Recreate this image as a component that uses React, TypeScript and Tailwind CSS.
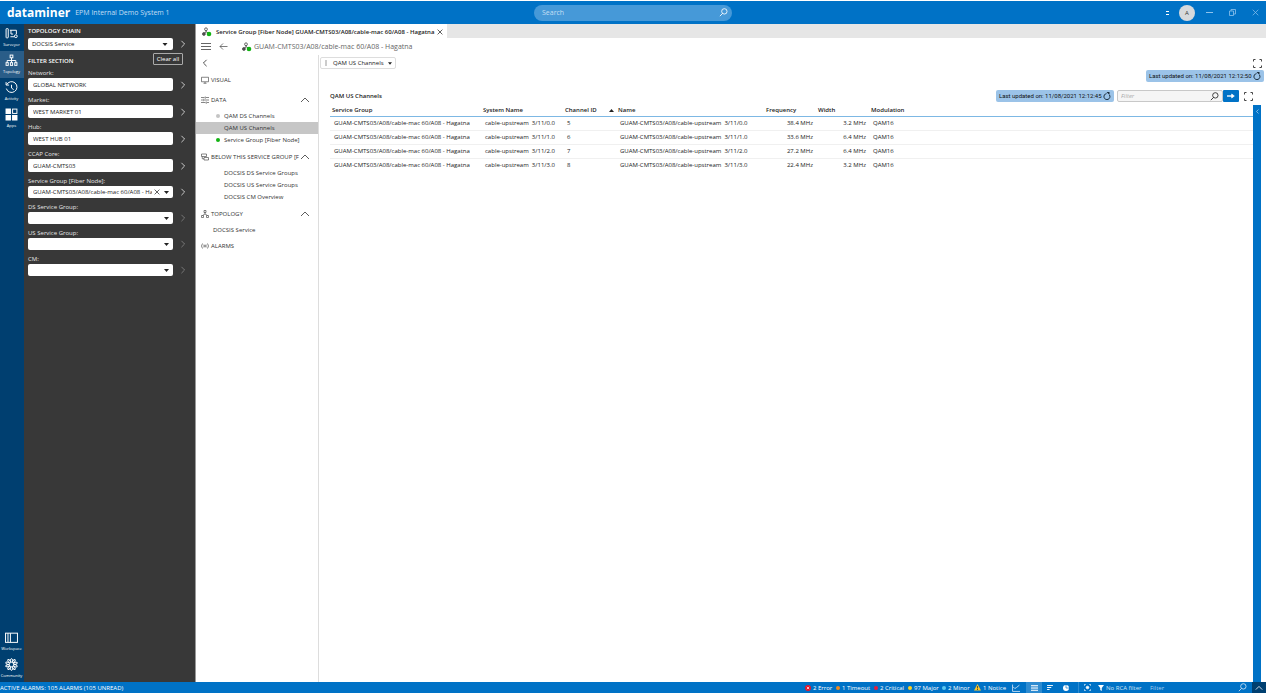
import { ReactNode, useState } from "react";
import clsx from "clsx";

interface IconProps {
  className?: string;
}

const SearchIcon = ({ className }: IconProps) => (
  <svg viewBox="0 0 16 16" fill="none" stroke="currentColor" strokeWidth="1.5" className={clsx("h-[9px] w-[9px] shrink-0", className)}>
    <circle cx="9.5" cy="6" r="4.8" />
    <path d="M6.5 9.5L1.5 14.5" />
  </svg>
);

const ArrowDown = ({ className }: IconProps) => (
  <svg viewBox="0 0 10 6" fill="currentColor" className={clsx("shrink-0", className)}>
    <path d="M0 0H10L5 6Z" />
  </svg>
);

const Chevron = ({ className, d }: IconProps & { d: string }) => (
  <svg viewBox="0 0 10 10" fill="none" stroke="currentColor" className={clsx("shrink-0", className)}>
    <path d={d} />
  </svg>
);

const CloseIcon = ({ className }: IconProps) => (
  <svg viewBox="0 0 10 10" fill="none" stroke="currentColor" strokeWidth="1.2" className={clsx("shrink-0", className)}>
    <path d="M1 1L9 9M9 1L1 9" />
  </svg>
);

const FullscreenIcon = () => (
  <svg viewBox="0 0 9 9" fill="none" stroke="#444" className="h-[9px] w-[9px]">
    <path d="M.5 2.5V.5H2.5M6.5 .5H8.5V2.5M8.5 6.5V8.5H6.5M2.5 8.5H.5V6.5" />
  </svg>
);

const RefreshIcon = () => (
  <svg viewBox="0 0 16 16" fill="none" stroke="#1a2b3a" strokeWidth="2" className="h-2 w-2">
    <path d="M13 6A6 6 0 1 1 7 3.2" />
    <path d="M7 0L13 0V6Z" fill="#1a2b3a" stroke="none" />
  </svg>
);

const NodeIcon = () => (
  <svg viewBox="0 0 20 20" fill="none" stroke="#444" strokeWidth="1.6" className="h-[10px] w-[10px] shrink-0">
    <circle cx="8" cy="4.5" r="2.8" />
    <circle cx="3.8" cy="14" r="2.8" fill="#555" />
    <path d="M8 7.5V10L5 12M8 9.5L13 12" />
    <circle cx="14" cy="14" r="4.6" fill="#12b312" stroke="none" />
  </svg>
);

const petals = [0, 36, 72, 108, 144, 180, 216, 252, 288, 324];

const railTop = [
  {
    label: "Surveyor",
    icon: (
      <>
        <rect x="2" y="3" width="4" height="17" rx="1" />
        <path d="M9 6H21V13M11 6V13H15" />
        <circle cx="20" cy="17" r="2.6" />
        <path d="M10 18H17" />
      </>
    ),
  },
  {
    label: "Topology",
    icon: (
      <>
        <rect x="9.5" y="2" width="5" height="5" />
        <path d="M12 7V16M4 16V12H20V16" />
        <rect x="2" y="16" width="4" height="5" />
        <rect x="10" y="16" width="4" height="5" />
        <rect x="18" y="16" width="4" height="5" />
      </>
    ),
  },
  {
    label: "Activity",
    icon: (
      <>
        <path d="M3 7A10 10 0 1 1 2.5 14" />
        <path d="M2 2V7.5H7.5M12 7V13L16 16" />
      </>
    ),
  },
  {
    label: "Apps",
    icon: (
      <>
        <path d="M1 1H11V11H1ZM1 13H11V23H1ZM13 13H23V23H13Z" fill="white" stroke="none" />
        <rect x="14" y="2" width="8" height="8" />
      </>
    ),
  },
];

const railBottom = [
  {
    label: "Workspace",
    icon: (
      <>
        <rect x="1" y="4" width="22" height="17" />
        <path d="M10 4V21M5.5 4V21" />
      </>
    ),
  },
  {
    label: "Community",
    icon: (
      <>
        {petals.map((p) => (
          <ellipse key={p} cx="12" cy="4.5" rx="1.8" ry="3.5" transform={`rotate(${p} 12 12)`} strokeWidth="1.8" />
        ))}
      </>
    ),
  },
];

function RailButton({ label, icon, active }: { label: string; icon: ReactNode; active?: boolean }) {
  return (
    <button className={clsx("flex h-[27px] w-full flex-col items-center justify-center gap-[2px] pr-px text-[4px] leading-[6px] text-white", active && "bg-[#2a5d88]")}>
      <svg viewBox="0 0 24 24" fill="none" stroke="white" strokeWidth="1.8" className="h-[13px] w-[13px]">
        {icon}
      </svg>
      {label}
    </button>
  );
}

interface IFilter {
  id: string;
  label: string;
  value: string;
  select?: boolean;
  clear?: boolean;
}

const filters: IFilter[] = [
  { id: "network", label: "Network:", value: "GLOBAL NETWORK" },
  { id: "market", label: "Market:", value: "WEST MARKET 01" },
  { id: "hub", label: "Hub:", value: "WEST HUB 01" },
  { id: "ccap", label: "CCAP Core:", value: "GUAM-CMTS03" },
  { id: "sg", label: "Service Group [Fiber Node]:", value: "GUAM-CMTS03/A08/cable-mac 60/A08 - Hagatna", select: true, clear: true },
  { id: "ds", label: "DS Service Group:", value: "", select: true },
  { id: "us", label: "US Service Group:", value: "", select: true },
  { id: "cm", label: "CM:", value: "", select: true },
];

function FilterField({ id, label, value, select, clear }: IFilter) {
  return (
    <div>
      <label htmlFor={id} className="block leading-[9px] text-[#e6e6e6]">{label}</label>
      <div className="flex items-center">
        <div className={clsx("flex min-w-0 flex-1 items-center rounded-[2px] bg-white text-[#222]", select ? "h-3" : "h-[13px]")}>
          {select ? (
            <>
              <select id={id} defaultValue={value} className="h-full min-w-0 flex-1 appearance-none bg-transparent pl-[5px] outline-none">
                <option>{value}</option>
              </select>
              {clear && (
                <button aria-label="Clear" className="mr-1 ml-[2px]">
                  <CloseIcon className="h-[6px] w-[6px]" />
                </button>
              )}
              <ArrowDown className="mr-1 h-[3px] w-[5px]" />
            </>
          ) : (
            <input id={id} defaultValue={value} className="h-full w-full bg-transparent px-[5px] outline-none" />
          )}
        </div>
        <button aria-label={`Open ${label}`} className={clsx("ml-[6px]", select && !clear ? "text-[#888]" : "text-[#eee]")}>
          <Chevron d="M3 1L7 5L3 9" className="h-2 w-2" />
        </button>
      </div>
    </div>
  );
}

function FilterPanel() {
  return (
    <aside className="w-[171px] shrink-0 bg-[#383838] pt-[3px] pr-[8px] pl-1">
      <label htmlFor="chain" className="block font-semibold leading-[9px] text-white">TOPOLOGY CHAIN</label>
      <div className="mt-[2px] flex items-center">
        <div className="flex h-3 flex-1 items-center rounded-[2px] bg-white text-[#222]">
          <select id="chain" className="h-full flex-1 appearance-none bg-transparent pl-1 outline-none">
            <option>DOCSIS Service</option>
          </select>
          <ArrowDown className="mr-[5px] h-[3px] w-[6px]" />
        </div>
        <button aria-label="Open chain" className="ml-[6px] text-[#eee]">
          <Chevron d="M3 1L7 5L3 9" className="h-2 w-2" />
        </button>
      </div>
      <div className="mt-[3px] mb-1 flex items-center justify-between">
        <h2 className="pt-1 font-semibold text-white">FILTER SECTION</h2>
        <button className="mr-1 h-3 w-[30px] rounded-[1px] border border-[#aaa] leading-[9px] text-white">Clear all</button>
      </div>
      <div className="flex flex-col gap-[5px]">
        {filters.map((f) => (
          <FilterField key={f.id} {...f} />
        ))}
      </div>
    </aside>
  );
}

function NavSection({ icon, title, children }: { icon: ReactNode; title: string; children?: ReactNode }) {
  const [open, setOpen] = useState(true);
  return (
    <section>
      <button onClick={() => setOpen(!open)} className="flex h-4 w-full items-center gap-[2px] pr-[9px] pl-[5px] text-[#333]">
        <svg viewBox="0 0 16 16" fill="none" stroke="#444" strokeWidth="1.3" className="h-2 w-2 shrink-0">{icon}</svg>
        <span className="whitespace-nowrap">{title}</span>
        {children && <Chevron d="M0 7.5L5 2.5L10 7.5" className="ml-auto h-2 w-2" />}
      </button>
      {open && children}
    </section>
  );
}

function NavItem({ label, dot, active, className = "pl-[20px]" }: { label: string; dot?: string; active?: boolean; className?: string }) {
  return (
    <a href="#" className={clsx("flex h-3 items-center gap-1 text-[#333]", className, active && "bg-[#c6c6c6]")}>
      <span className={clsx("h-1 w-1 rounded-full", dot)} />
      {label}
    </a>
  );
}

function SideNav() {
  return (
    <nav className="w-[123px] shrink-0 border-r border-[#ddd] bg-white">
      <button aria-label="Back" className="flex h-4 items-center pl-[5px] text-[#222]">
        <Chevron d="M7 1L3 5L7 9" className="h-2 w-2" />
      </button>
      <div className="mt-px">
        <NavSection title="VISUAL" icon={<path d="M1 2.5H15V11.5H1ZM8 12V14.5M5 14.5H11" />} />
      </div>
      <div className="mt-1 mb-[3px]">
        <NavSection title="DATA" icon={<path d="M0 3H7M10 3H16M0 8H3M6 8H16M0 13H9M12 13H16M8.5 1V5.5M4.5 5.5V10.5M10.5 11V15.5" />}>
          <div className="pt-[2px]">
            <NavItem label="QAM DS Channels" dot="bg-[#c4c4c4]" />
            <NavItem label="QAM US Channels" active />
            <NavItem label="Service Group [Fiber Node]" dot="bg-[#12b312]" />
          </div>
        </NavSection>
      </div>
      <NavSection title="BELOW THIS SERVICE GROUP [F" icon={<path d="M1 2H11V7H1ZM6 9H15V14H6ZM2.5 7V11.5H6" />}>
        <div className="pt-[2px] pb-[3px]">
          <NavItem label="DOCSIS DS Service Groups" />
          <NavItem label="DOCSIS US Service Groups" />
          <NavItem label="DOCSIS CM Overview" />
        </div>
      </NavSection>
      <NavSection title="TOPOLOGY" icon={<path d="M6 1H10V5H6ZM1 11H5V15H1ZM11 11H15V15H11ZM8 5V8L3 11M8 8L13 11" />}>
        <div className="py-[2px]">
          <NavItem label="DOCSIS Service" className="pl-[9px]" />
        </div>
      </NavSection>
      <NavSection title="ALARMS" icon={<path d="M3 3Q-1 8 3 13M13 3Q17 8 13 13M6 5V11M10 5V11M6 8H10" />} />
    </nav>
  );
}

function UpdatedPill({ time }: { time: string }) {
  return (
    <div className="flex h-3 w-[118px] items-center justify-between rounded-[2px] bg-[#9bc3e8] pr-[3px] pl-[3px] font-['Roboto','Open_Sans',sans-serif] text-[#111]">
      <span className="whitespace-nowrap">Last updated on: {time}</span>
      <button aria-label="Refresh"><RefreshIcon /></button>
    </div>
  );
}

const rows = [
  { port: "3/11/0.0", id: 5, frequency: "38.4 MHz", width: "3.2 MHz" },
  { port: "3/11/1.0", id: 6, frequency: "33.6 MHz", width: "6.4 MHz" },
  { port: "3/11/2.0", id: 7, frequency: "27.2 MHz", width: "6.4 MHz" },
  { port: "3/11/3.0", id: 8, frequency: "22.4 MHz", width: "3.2 MHz" },
];

function ChannelsTable() {
  return (
    <table className="w-full table-fixed border-collapse whitespace-pre text-[#222]">
      <colgroup>
        <col className="w-[151px]" />
        <col className="w-[82px]" />
        <col className="w-[53px]" />
        <col className="w-[148px]" />
        <col className="w-[52px]" />
        <col className="w-[53px]" />
        <col />
      </colgroup>
      <thead>
        <tr className="h-[11px] border-b border-[#7db8e4] text-left *:pl-[2px] *:font-semibold">
          <th>Service Group</th>
          <th>System Name</th>
          <th>
            <span className="flex items-center justify-between pr-[2px]">
              Channel ID
              <ArrowDown className="h-[3px] w-[5px] rotate-180" />
            </span>
          </th>
          <th>Name</th>
          <th>Frequency</th>
          <th>Width</th>
          <th>Modulation</th>
        </tr>
      </thead>
      <tbody>
        {rows.map((r) => (
          <tr key={r.id} className="h-[14px] border-b border-[#f0f0f0] last:border-b-0 *:pl-1">
            <td>GUAM-CMTS03/A08/cable-mac 60/A08 - Hagatna</td>
            <td>{`cable-upstream  ${r.port}`}</td>
            <td>{r.id}</td>
            <td>{`GUAM-CMTS03/A08/cable-upstream  ${r.port}`}</td>
            <td className="pr-[3px] text-right">{r.frequency}</td>
            <td className="pr-[3px] text-right">{r.width}</td>
            <td>QAM16</td>
          </tr>
        ))}
      </tbody>
    </table>
  );
}

function Content() {
  return (
    <main className="flex min-w-0 flex-1 flex-col bg-white">
      <div className="flex items-center justify-between pt-[2px] pr-1 pl-px">
        <button className="flex h-3 w-[76px] items-center rounded-[2px] border border-[#ddd] text-[#222]">
          <span className="mr-1 ml-1 h-[6px] w-[2px] bg-[#ccc]" />
          <span className="pl-[2px]">QAM US Channels</span>
          <ArrowDown className="ml-auto mr-[3px] h-[3px] w-1" />
        </button>
        <button aria-label="Fullscreen"><FullscreenIcon /></button>
      </div>
      <div className="mt-px flex justify-end pr-[2px]">
        <UpdatedPill time="11/08/2021 12:12:50" />
      </div>
      <div className="mt-2 flex h-3 items-center pr-[13px] pl-[11px]">
        <h1 className="mr-auto font-semibold text-[#222]">QAM US Channels</h1>
        <UpdatedPill time="11/08/2021 12:12:45" />
        <div className="ml-[3px] flex h-3 w-[106px] items-center rounded-[2px] border border-[#c8c8c8] bg-[#f5f5f5] pr-[3px]">
          <input aria-label="Filter table" placeholder="Filter" className="min-w-0 flex-1 pl-[3px] italic outline-none placeholder:text-[#aaa]" />
          <SearchIcon className="text-[#222]" />
        </div>
        <button aria-label="Apply filter" className="flex h-3 w-[16px] items-center justify-center rounded-[1px] bg-[#0072c6]">
          <svg viewBox="0 0 12 8" fill="none" stroke="white" strokeWidth="2" className="h-[6px] w-2">
            <path d="M0 4H9" />
            <path d="M7 1V7L11 4Z" fill="white" strokeWidth="1" />
          </svg>
        </button>
        <button aria-label="Expand" className="ml-[5px]"><FullscreenIcon /></button>
      </div>
      <div className="flex flex-1 pt-[3px] pr-[5px] pl-[11px]">
        <div className="min-w-0 flex-1">
          <ChannelsTable />
        </div>
        <button aria-label="Open side panel" className="flex w-2 justify-center bg-[#0072c6] pt-1 text-white">
          <Chevron d="M7 1L3 5L7 9" className="h-[5px] w-[5px]" />
        </button>
      </div>
    </main>
  );
}

const alarms = [
  { text: "1 Timeout", color: "bg-[#f08a1d]", width: "w-[38px]" },
  { text: "2 Critical", color: "bg-[#e81c3c]", width: "w-[34px]" },
  { text: "97 Major", color: "bg-[#ffd21f]", width: "w-[34px]" },
  { text: "2 Minor", color: "bg-[#5cc8f0]", width: "w-[32px]" },
];

function StatusBar() {
  return (
    <footer className="flex h-[11px] shrink-0 items-center bg-[#0072c6] whitespace-nowrap text-white">
      <span className="mr-auto">ACTIVE ALARMS: 105 ALARMS (105 UNREAD)</span>
      <div className="flex items-center">
        <span className="flex w-[31px] items-center gap-[2px]">
          <svg viewBox="0 0 10 10" className="h-[6px] w-[6px]">
            <circle cx="5" cy="5" r="5" fill="#e5152c" />
            <path d="M3 3L7 7M7 3L3 7" stroke="white" strokeWidth="1.2" />
          </svg>
          2 Error
        </span>
        {alarms.map((a) => (
          <span key={a.text} className={clsx("flex items-center gap-[2px]", a.width)}>
            <span className={clsx("h-1 w-1 rounded-full", a.color)} />
            {a.text}
          </span>
        ))}
        <span className="flex w-[38px] items-center gap-[2px]">
          <svg viewBox="0 0 14 14" className="h-[7px] w-[7px]">
            <path d="M7 0L14 13H0Z" fill="#ffc928" />
            <path d="M7 4V9M7 10V12" stroke="#333" strokeWidth="1.6" />
          </svg>
          1 Notice
        </span>
      </div>
      <button aria-label="Trend" className="mr-[6px]">
        <svg viewBox="0 0 14 14" fill="none" stroke="#cfe3f4" strokeWidth="1.5" className="h-2 w-2"><path d="M1 1V13H14M2 5L5 8L8 6L13 2" /></svg>
      </button>
      <button aria-label="List" className="flex h-full w-4 items-center justify-center bg-[#2e8bd0]">
        <svg viewBox="0 0 14 12" stroke="white" strokeWidth="1.6" className="h-[6px] w-[7px]"><path d="M0 1H14M0 4.3H14M0 7.6H14M0 11H14" /></svg>
      </button>
      <button aria-label="Sort" className="flex w-4 items-center justify-center">
        <svg viewBox="0 0 14 12" stroke="white" strokeWidth="2.4" className="h-[5px] w-[6px]"><path d="M0 1H14M0 6H10M0 11H6" /></svg>
      </button>
      <button aria-label="Pie" className="flex w-4 items-center justify-center">
        <svg viewBox="0 0 14 14" className="h-[6px] w-[6px]"><circle cx="7" cy="7" r="7" fill="white" /><path d="M7 0V7H14" stroke="#0072c6" strokeWidth="1.5" fill="none" /></svg>
      </button>
      <button aria-label="Focus" className="ml-[4px] flex h-full w-[18px] items-center justify-center border-l border-[#2e8bd0]">
        <svg viewBox="0 0 16 16" fill="none" stroke="white" strokeWidth="1.6" className="h-[7px] w-[7px]"><path d="M1 4V1H4M12 1H15V4M15 12V15H12M4 15H1V12" /><circle cx="8" cy="8" r="3" fill="white" /></svg>
      </button>
      <span className="ml-[2px] flex w-[50px] items-center gap-[2px] text-[#cfe3f4]">
        <svg viewBox="0 0 12 12" fill="white" className="h-[6px] w-[6px]"><path d="M0 0H12L7.5 6V12L4.5 10V6Z" /></svg>
        No RCA filter
      </span>
      <div className="flex w-[104px] items-center pr-[5px]">
        <input aria-label="Filter alarms" placeholder="Filter" className="min-w-0 flex-1 pl-[2px] outline-none placeholder:text-[#a9cff0]" />
        <SearchIcon className="text-[#cfe3f4]" />
      </div>
      <button aria-label="Expand alarms" className="flex h-full w-[14px] items-center justify-center bg-[#003f70]">
        <Chevron d="M1 7L5 3L9 7" className="h-2 w-2" />
      </button>
    </footer>
  );
}

function TitleBar() {
  return (
    <header className="mt-px flex h-[23px] shrink-0 items-center bg-[#0072c6] text-white">
      <div className="flex flex-1 items-center">
        <span className="ml-[7px] text-[12px] leading-4 font-bold">dataminer</span>
        <span className="ml-[5px] text-[7px] text-[#c4dff4]">EPM Internal Demo System 1</span>
      </div>
      <div className="flex h-4 w-[198px] items-center rounded-full bg-[#4699d8] pr-1 pl-2">
        <input aria-label="Search" placeholder="Search" className="min-w-0 flex-1 text-[7px] outline-none placeholder:text-[#c4dff4]" />
        <SearchIcon className="text-white" />
      </div>
      <div className="flex flex-1 items-center justify-end text-[#8fc3ec]">
        <span className="mr-[10px] flex flex-col gap-[2px]">
          <span className="h-px w-[3px] bg-white" />
          <span className="h-px w-[3px] bg-white" />
        </span>
        <button className="mr-[11px] h-4 w-4 rounded-full bg-[#d6d9dc] text-[6px] text-[#333]">A</button>
        <button aria-label="Minimize" className="mr-4 flex h-2 w-[7px] items-center"><span className="h-px w-full bg-[#8fc3ec]" /></button>
        <button aria-label="Restore" className="mr-4">
          <svg viewBox="0 0 14 14" fill="none" stroke="currentColor" strokeWidth="1.6" className="h-[7px] w-[7px]"><path d="M1 4H9V13H1ZM4 4V1H13V10H9" /></svg>
        </button>
        <button aria-label="Close" className="mr-[7px]"><Chevron d="M1 1L9 9M9 1L1 9" className="h-[7px] w-[7px]" /></button>
      </div>
    </header>
  );
}

export default function App() {
  return (
    <div className="flex h-screen flex-col overflow-hidden bg-white font-['Open_Sans','Noto_Sans',sans-serif] text-[6px] leading-[8px]">
      <TitleBar />
      <div className="flex min-h-0 flex-1">
        <nav className="flex w-6 shrink-0 flex-col justify-between bg-[#003f70]">
          <div>
            {railTop.map((r) => (
              <RailButton key={r.label} {...r} active={r.label === "Topology"} />
            ))}
          </div>
          <div>
            {railBottom.map((r) => (
              <RailButton key={r.label} {...r} />
            ))}
          </div>
        </nav>
        <FilterPanel />
        <div className="flex min-w-0 flex-1 flex-col border-l border-[#999]">
          <div className="flex h-[14px] bg-[#e6e6e6]">
            <div className="flex items-center bg-white pt-px pr-1 pl-[6px] font-semibold text-[#222]">
              <NodeIcon />
              <span className="mr-[3px] ml-1 whitespace-nowrap">Service Group [Fiber Node] GUAM-CMTS03/A08/cable-mac 60/A08 - Hagatna</span>
              <button aria-label="Close tab"><CloseIcon className="h-[6px] w-[6px]" /></button>
            </div>
          </div>
          <div className="flex h-[17px] items-center bg-white pl-[5px] text-[7px] text-[#666]">
            <button aria-label="Menu" className="mr-2 flex w-[10px] flex-col gap-[2px]">
              <span className="h-px w-full bg-[#666]" />
              <span className="h-px w-full bg-[#666]" />
              <span className="h-px w-full bg-[#666]" />
            </button>
            <button aria-label="Previous" className="mr-[14px]">
              <svg viewBox="0 0 16 14" fill="none" stroke="#444" strokeWidth="1.4" className="h-[7px] w-[9px]"><path d="M16 7H1M7 1L1 7L7 13" /></svg>
            </button>
            <NodeIcon />
            <span className="ml-[2px]">GUAM-CMTS03/A08/cable-mac 60/A08 - Hagatna</span>
          </div>
          <div className="flex min-h-0 flex-1">
            <SideNav />
            <Content />
          </div>
        </div>
      </div>
      <StatusBar />
    </div>
  );
}
